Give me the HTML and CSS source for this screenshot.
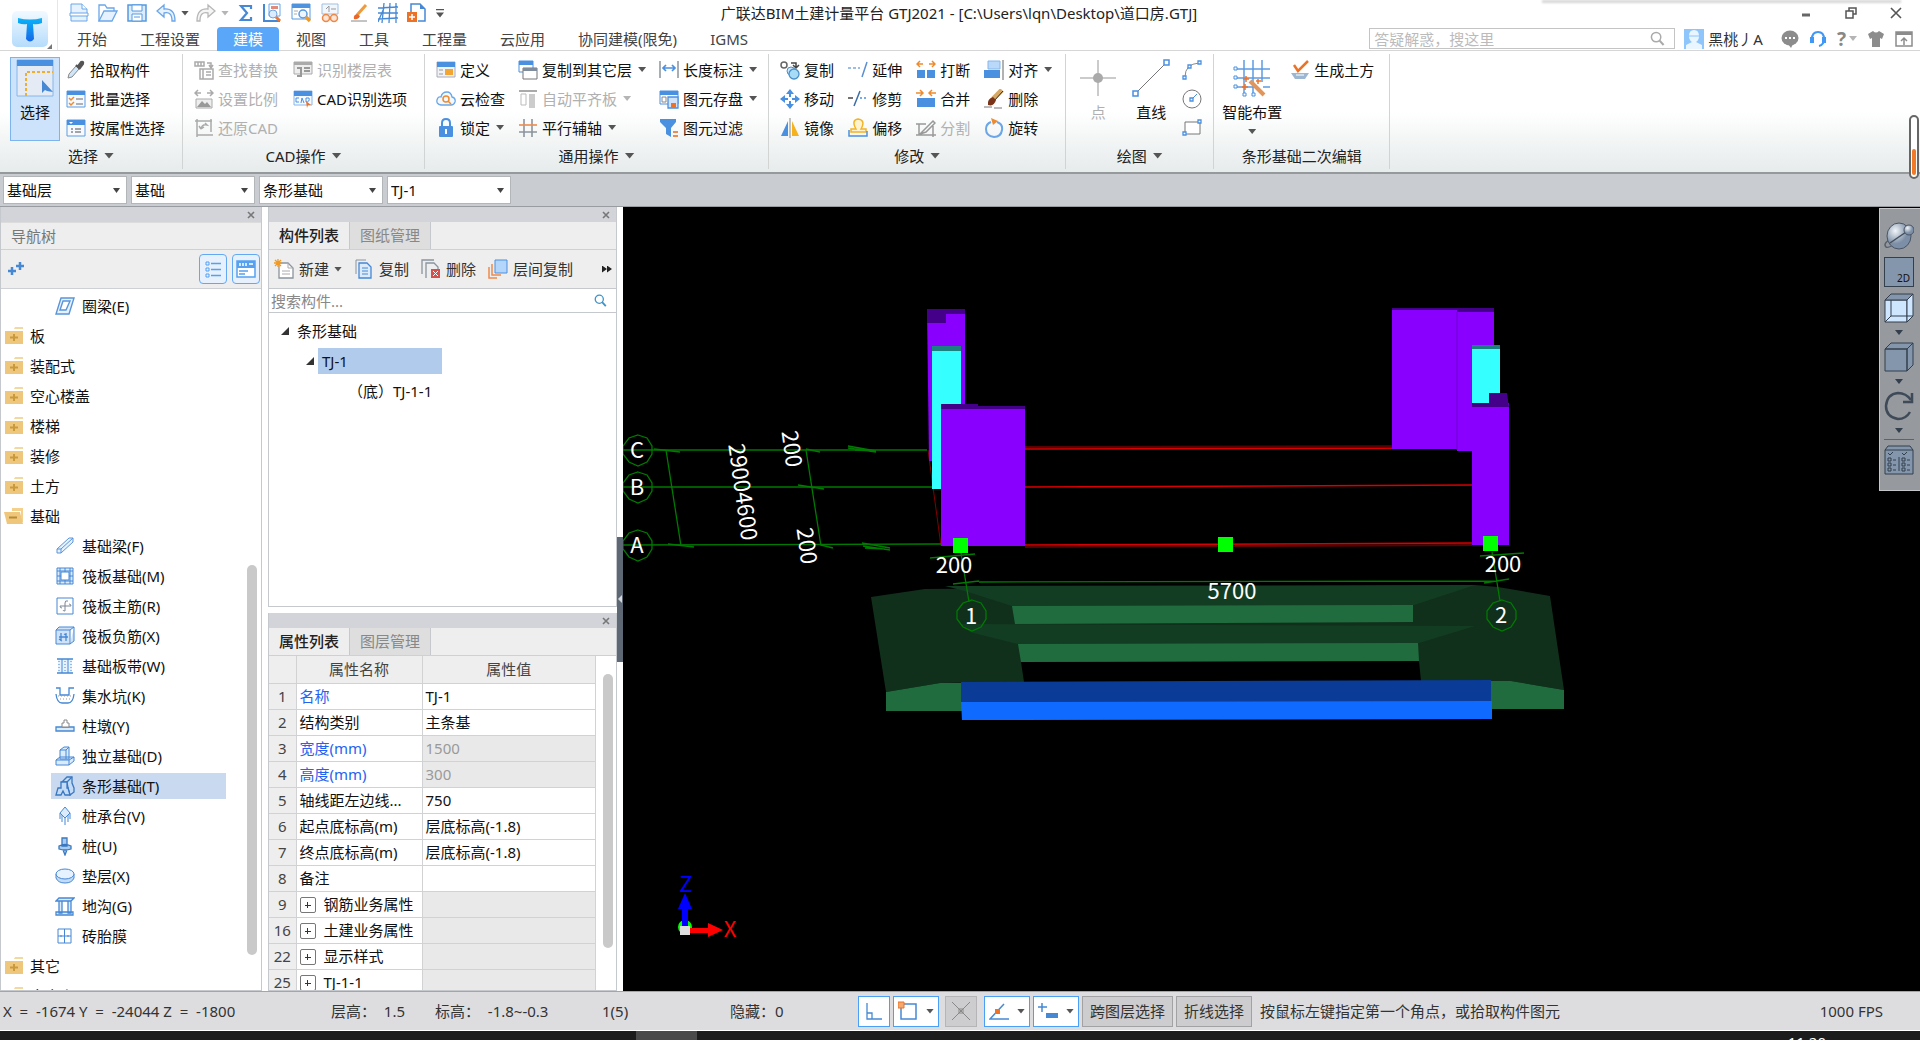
FILE: index.html
```html
<!DOCTYPE html>
<html lang="zh-CN">
<head>
  <meta charset="UTF-8" />
  <meta name="viewport" content="width=device-width, initial-scale=1.0"/>
  <title>广联达BIM土建计量平台 GTJ2021</title>
  <link rel="stylesheet" href="styles.css">
</head>
<body>

  <!-- shared icons -->
  <svg class="defs" width="0" height="0">
    <symbol id="folder" viewBox="0 0 20 20">
      <path d="M10 3l1-2h8v2z" fill="#f3d9a0"/><path d="M1 5h18v13H1z" fill="#eec77d"/>
      <path d="M10 8v7M6 11.500h8" stroke="#c99a3c" stroke-width="2"/>
    </symbol>
    <symbol id="folder-open" viewBox="0 0 20 20">
      <path d="M8 2h11v14h-2V5H8z" fill="#f3d08c"/><path d="M0 6h16l3 12H3z" fill="#eec77d"/>
      <path d="M5 11.500h8" stroke="#b98a35" stroke-width="2"/>
    </symbol>
    <symbol id="search" viewBox="0 0 16 16">
      <circle cx="6.500" cy="6.500" r="5" fill="none" stroke="currentColor" stroke-width="1.600"/><path d="M10 10l4.500 5" stroke="currentColor" stroke-width="2.200"/>
    </symbol>
    <symbol id="close" viewBox="0 0 8 8">
      <path d="M1 1l6 6M7 1L1 7" stroke="#777" stroke-width="1.600"/>
    </symbol>
  </svg>

  <header class="topbar">
    <button class="logo" aria-label="应用菜单">
      <svg width="38" height="38" viewBox="0 0 38 38">
        <defs><linearGradient id="lg" x1="0" y1="0" x2="0" y2="1"><stop offset="0" stop-color="#0ab4f8"/><stop offset="1" stop-color="#1766e8"/></linearGradient>
        <linearGradient id="lb" x1="0" y1="0" x2="0" y2="1"><stop offset="0" stop-color="#f2f9ff"/><stop offset="1" stop-color="#b5dcfb"/></linearGradient></defs>
        <rect x="1" y="1" width="36" height="36" rx="5" fill="url(#lb)"/>
        <path d="M7 8q12 3 24 0v5q-5 2-9 1l1 15q-4 5-8 0l1-15q-4 1-9-1z" fill="url(#lg)"/>
      </svg>
      <span class="corner"></span>
    </button>
    <div class="topmain">
      <div class="titlebar">
        <div class="quick">
          <svg class="ico" viewBox="0 0 20 20"><path d="M2 1h11l5 5v12H2z" fill="#e6f2ff" stroke="#6ba7e8"/><path d="M13 1v5h5M1 10h18v3H1z" fill="#fff" stroke="#6ba7e8"/></svg>
          <svg class="ico" viewBox="0 0 20 20"><path d="M1 18V2h6l2 3h7v4" fill="#fff" stroke="#6ba7e8" stroke-width="1.300"/><path d="M1 18L6 8h13l-5 10z" fill="#e6f2ff" stroke="#6ba7e8" stroke-width="1.300"/></svg>
          <svg class="ico" viewBox="0 0 20 20"><path d="M1 2h18v16H1z" fill="#dcebfd" stroke="#5599e0" stroke-width="1.500"/><path d="M5 2h10v6H5zM5 11h10v7H5z" fill="#fff" stroke="#5599e0"/><path d="M7 14h6" stroke="#5599e0"/></svg>
          <svg class="ico" viewBox="0 0 20 20"><path d="M8 2L1 8l7 6v-4q8-2 8 8h3q0-13-11-12z" fill="#e6f2ff" stroke="#6ba7e8" stroke-width="1.300"/></svg>
          <i class="arrow"></i>
          <svg class="ico redo" viewBox="0 0 20 20"><path d="M12 2l7 6-7 6v-4q-8-2-8 8H1q0-13 11-12z" fill="#f5f5f5" stroke="#b8b8b8" stroke-width="1.300"/></svg>
          <i class="arrow dim"></i>
          <svg class="ico sum" viewBox="0 0 20 20"><path d="M15 6V3H5l6 7-6 7h10v-3" fill="none" stroke="#4688d4" stroke-width="2.200"/></svg>
          <svg class="ico" viewBox="0 0 20 20"><path d="M2 1v17h16" fill="none" stroke="#4688d4" stroke-width="2"/><path d="M7 1h11v12H7z" fill="#fff" stroke="#6ba7e8"/><path d="M9 3h7v3H9z" fill="#e08a7a"/><circle cx="11" cy="11" r="4" fill="#dcebfd" stroke="#6ba7e8"/><path d="M14 14l4 4" stroke="#e8773a" stroke-width="3"/></svg>
          <svg class="ico" viewBox="0 0 20 20"><path d="M1 1h18v15H1z" fill="#fff" stroke="#5599e0"/><path d="M1 1h18v4H1z" fill="#4f93df"/><path d="M3 8h4M3 11h3" stroke="#aaa"/><circle cx="12" cy="11" r="4" fill="#eef5fe" stroke="#5599e0" stroke-width="1.500"/><path d="M15 14l4 4" stroke="#f09a24" stroke-width="3.500"/></svg>
          <svg class="ico" viewBox="0 0 20 20"><path d="M2 1h16v10H2z" fill="#f2f7fd" stroke="#9dbfe5"/><path d="M9 3v6M6 6l3-3M11 6h5" stroke="#999" fill="none"/><circle cx="6" cy="15" r="3.500" fill="#fde6d8" stroke="#ee8846" stroke-width="1.500"/><circle cx="14" cy="15" r="3.500" fill="#fde6d8" stroke="#ee8846" stroke-width="1.500"/></svg>
          <svg class="ico" viewBox="0 0 20 20"><path d="M17 2L8 12" stroke="#f09a3c" stroke-width="3"/><path d="M8 11q-4 1-3 5 4 1 6-3z" fill="#e8662a"/><path d="M2 18h16" stroke="#888"/></svg>
          <svg class="ico" viewBox="0 0 20 20"><path d="M6 0L4 20M12 0l-1 20M18 0v20M0 5l20-1M0 10h20M0 16l20-1M0 19L6 5" stroke="#4688d4" stroke-width="1.300"/></svg>
          <svg class="ico" viewBox="0 0 20 20"><path d="M4 9V1h9l5 5v12h-7" fill="#fff" stroke="#4688d4" stroke-width="1.500"/><path d="M13 1v5h5" fill="#4688d4"/><path d="M0 9h10v10H0z" fill="#ee7226"/><path d="M5 11v6M2 14h6" stroke="#fff" stroke-width="1.500"/></svg>
          <span class="more"></span>
        </div>
        <div class="title">广联达BIM土建计量平台 GTJ2021 - [C:\Users\lqn\Desktop\道口房.GTJ]</div>
        <div class="winbtns">
          <button aria-label="最小化"><svg width="12" height="12"><path d="M2 8h8" stroke="#666" stroke-width="3"/></svg></button>
          <button aria-label="还原"><svg width="12" height="12" fill="#fff" stroke="#555" stroke-width="1.500"><path d="M4 1h7v6H4z"/><path d="M1 4h7v7H1z"/></svg></button>
          <button aria-label="关闭"><svg width="12" height="12"><path d="M1 1l10 10M11 1L1 11" stroke="#555" stroke-width="1.600"/></svg></button>
        </div>
      </div>
      <div class="menurow">
        <nav class="tabs">
          <button>开始</button><button>工程设置</button><button class="active">建模</button><button>视图</button><button>工具</button><button>工程量</button><button>云应用</button><button>协同建模(限免)</button><button>IGMS</button>
        </nav>
        <div class="account">
          <label class="help"><input type="text" placeholder="答疑解惑，搜这里" aria-label="答疑解惑"><svg width="15" height="15"><use href="#search"/></svg></label>
          <svg class="avatar" width="20" height="20" viewBox="0 0 20 20"><path d="M0 0h20v20H0z" fill="#8ec5fb"/><path d="M5 7q0-6 5-6t5 6q0 4-3 6l6 3v4H2v-4l6-3Q5 11 5 7z" fill="#e9f5ff"/><path d="M5 7h10" stroke="#8ec5fb"/></svg>
          <span class="user">黑桃丿A</span>
          <div class="tools">
            <svg width="18" height="18" viewBox="0 0 18 18"><ellipse cx="9" cy="8" rx="8.500" ry="7.500" fill="#8c8c8c"/><path d="M7 14l3 4 2-4z" fill="#8c8c8c"/><path d="M4 8h2M8 8h2M12 8h2" stroke="#fff" stroke-width="2"/></svg>
            <svg width="18" height="18" viewBox="0 0 18 18"><path d="M3 9q0-7 6-7t6 7q0 6-5 7" fill="none" stroke="#3f97f6" stroke-width="2"/><path d="M1 7h4v6H1zM13 7h4v6h-4z" fill="#3f97f6"/></svg>
            <span class="qmark">?<i class="arrow dim"></i></span>
            <svg width="18" height="18" viewBox="0 0 18 18"><path d="M6 1q3 3 6 0l5 3-2 5-2-1v9H5V8L3 9 1 4z" fill="#8c8c8c"/></svg>
            <svg width="18" height="18" viewBox="0 0 18 18"><path d="M1 2h16v14H1z" fill="#fff" stroke="#8c8c8c" stroke-width="1.500"/><path d="M1 2h16v3H1z" fill="#8c8c8c"/><path d="M9 15V8M6 11l3-3 3 3" fill="none" stroke="#8c8c8c" stroke-width="1.500"/></svg>
          </div>
        </div>
      </div>
    </div>
    <div class="topshadow"></div>
  </header>

  <section class="ribbon">
    <div class="group g-select">
      <div class="body">
        <button class="big on">
          <svg width="38" height="38" viewBox="0 0 38 38"><path d="M1 1h36v36H1z" fill="#e4ebf5" stroke="#86b6ea"/><path d="M1 1h36v6H1z" fill="#4a90e0"/><path d="M10 37V13h27" fill="none" stroke="#efae2c" stroke-width="2" stroke-dasharray="3 2"/><path d="M26 21v13l3-3 2 1 6 1z" fill="#4688d4"/></svg>
          选择
        </button>
        <div class="col">
          <button><svg class="ico" viewBox="0 0 20 20"><path d="M2 18l1-4 7-8 3 3-7 8z" fill="#cfe5fa" stroke="#888"/><path d="M10 5l4 4M12 6l3-4q3-1 2 2l-3 4z" fill="#555" stroke="#555" stroke-width="2"/></svg>拾取构件</button>
          <button><svg class="ico" viewBox="0 0 20 20"><path d="M1 2h18v16H1z" fill="#f6faff" stroke="#5c9ce2"/><path d="M1 2h18v4H1z" fill="#4a90e0"/><path d="M3 9l2 2 3-3M3 14l2 2 3-3" fill="none" stroke="#ee8b2e" stroke-width="1.500"/><path d="M10 10h7M10 15h7" stroke="#999" stroke-width="1.500"/></svg>批量选择</button>
          <button><svg class="ico" viewBox="0 0 20 20"><path d="M1 2h18v16H1z" fill="#f6faff" stroke="#5c9ce2"/><path d="M1 2h18v5H1z" fill="#4a90e0"/><path d="M3 4h4l-2 2z" fill="#fff"/><path d="M5 11h2M9 11h6M5 14h2M9 14h6" stroke="#888" stroke-width="1.500"/></svg>按属性选择</button>
        </div>
      </div>
      <div class="caption">选择<i class="arrow lg"></i></div>
    </div>

    <div class="group g-cad">
      <div class="body">
        <div class="col">
          <button disabled><svg class="ico" viewBox="0 0 20 20" fill="none" stroke="#aaa" stroke-width="1.500"><path d="M1 2h9v4H1zM4 2v4M7 2v4M13 3h4v4M15 5l2 3 2-3M6 9h13v10H6zM9 9v10M12 12h5M12 15h5"/></svg>查找替换</button>
          <button disabled><svg class="ico" viewBox="0 0 20 20"><path d="M1 4h6M13 4h6M4 1L1 4l3 3M16 1l3 3-3 3" fill="none" stroke="#aaa" stroke-width="1.500"/><path d="M2 10h16v9H2z" fill="#eee" stroke="#aaa"/><path d="M3 18l5-6 3 3 2-2 4 5z" fill="#999"/></svg>设置比例</button>
          <button disabled><svg class="ico" viewBox="0 0 20 20" fill="none" stroke="#aaa" stroke-width="1.500"><path d="M3 1v18M1 3h17M17 1v13M3 17h16M7 11q1-5 6-4l-2-2M7 11l-2-3M7 11l3-2"/></svg>还原CAD</button>
        </div>
        <div class="col">
          <button disabled><svg class="ico" viewBox="0 0 20 20"><path d="M1 2h18v12H1z" fill="#eee" stroke="#aaa"/><path d="M1 2h18v3H1z" fill="#aaa"/><path d="M4 8h4v8H4M11 8h6M11 11h6" fill="none" stroke="#999" stroke-width="2"/></svg>识别楼层表</button>
          <button><svg class="ico" viewBox="0 0 20 20"><path d="M1 2h18v14H1z" fill="#f6faff" stroke="#86b6ea"/><path d="M1 2h18v5H1z" fill="#4a90e0"/><path d="M6 9H3v4h3M8 14l1-5 2 5M13 9v4q4 0 3-4z" fill="none" stroke="#4a90e0"/><path d="M13 12l5 4-3 0-1 3z" fill="#ee7226"/></svg>CAD识别选项</button>
        </div>
      </div>
      <div class="caption">CAD操作<i class="arrow lg"></i></div>
    </div>

    <div class="group g-common">
      <div class="body">
        <div class="col">
          <button><svg class="ico" viewBox="0 0 20 20"><path d="M1 2h18v15H1z" fill="#f0f2f5" stroke="#aab"/><path d="M1 2h18v5H1z" fill="#4a90e0"/><path d="M9 9h8v6H9z" fill="#f2a531"/><path d="M3 10h4M3 14h4" stroke="#999"/></svg>定义</button>
          <button><svg class="ico" viewBox="0 0 20 20"><path d="M5 16q-5-1-4-5t4-3q1-5 6-5 4 0 5 5 4 1 3 5-1 3-4 3z" fill="#f3f9ff" stroke="#6ba7e8" stroke-width="1.300"/><circle cx="10" cy="10" r="3" fill="none" stroke="#ee8b2e" stroke-width="1.500"/><path d="M12 12l3 3" stroke="#ee8b2e" stroke-width="1.500"/></svg>云检查</button>
          <button><svg class="ico" viewBox="0 0 20 20"><path d="M6 9V5q0-4 4-4t4 4v4" fill="none" stroke="#4a90e0" stroke-width="2"/><rect x="3" y="8" width="14" height="11" rx="1" fill="#4a90e0"/><path d="M10 11v5" stroke="#fff" stroke-width="2"/></svg>锁定<i class="arrow"></i></button>
        </div>
        <div class="col">
          <button><svg class="ico" viewBox="0 0 20 20"><path d="M1 1h14v11H1z" fill="#fff" stroke="#4a90e0"/><path d="M1 1h14v4H1z" fill="#4a90e0"/><path d="M5 8h14v11H5z" fill="#fff" stroke="#777"/><path d="M5 8h14v3H5z" fill="#7e8c9c"/></svg>复制到其它层<i class="arrow"></i></button>
          <button disabled><svg class="ico" viewBox="0 0 20 20"><path d="M1 2h18" stroke="#aaa" stroke-width="2"/><path d="M3 5h5v11H3z" fill="#fff" stroke="#bbb"/><path d="M11 5h6v14h-6z" fill="#ccc"/></svg>自动平齐板<i class="arrow dim"></i></button>
          <button><svg class="ico" viewBox="0 0 20 20"><path d="M6 1v18M14 1v18M1 14h18" stroke="#8b949e" stroke-width="1.600"/><path d="M1 7h18" stroke="#ee8b4e" stroke-width="1.600"/></svg>平行辅轴<i class="arrow"></i></button>
        </div>
        <div class="col">
          <button><svg class="ico" viewBox="0 0 20 20"><path d="M1 1v17M19 1v17" stroke="#8b949e" stroke-width="1.500"/><path d="M4 8h12M7 5L4 8l3 3M13 5l3 3-3 3" fill="none" stroke="#4a90e0" stroke-width="1.700"/></svg>长度标注<i class="arrow"></i></button>
          <button><svg class="ico" viewBox="0 0 20 20"><path d="M1 2h18v13H1z" fill="#fff" stroke="#4a90e0"/><path d="M1 2h18v4H1z" fill="#4a90e0"/><path d="M3 8h4v5H3z" fill="none" stroke="#888"/><path d="M9 8h10v11H9z" fill="#cfe2f8" stroke="#4a90e0" stroke-width="1.300"/><path d="M12 14h5v5h-5z" fill="#ee7226"/></svg>图元存盘<i class="arrow"></i></button>
          <button><svg class="ico" viewBox="0 0 20 20"><path d="M1 1h16v3l-5 6v9l-5-3v-6L1 4z" fill="#4a90e0"/><path d="M14 14h5M14 18h5" stroke="#ee8b4e" stroke-width="1.800"/></svg>图元过滤</button>
        </div>
      </div>
      <div class="caption">通用操作<i class="arrow lg"></i></div>
    </div>

    <div class="group g-edit">
      <div class="body">
        <div class="col">
          <button><svg class="ico" viewBox="0 0 20 20"><circle cx="4" cy="5" r="3" fill="#fff" stroke="#666" stroke-width="1.500"/><path d="M11 3h5v4M13 5l3 3 3-3" fill="none" stroke="#444" stroke-width="1.500"/><circle cx="11" cy="11" r="4" fill="#cfe8ff" stroke="#4a90c8"/><circle cx="14" cy="14" r="5" fill="#a6dcf5" stroke="#4a90c8" stroke-width="1.300"/></svg>复制</button>
          <button><svg class="ico" viewBox="0 0 20 20"><path d="M10 1v18M1 10h18" stroke="#4a90e0" stroke-width="2" /><path d="M6 6h8v8H6z" fill="#fff"/><path d="M10 0l4 5H6zM10 20l4-5H6zM0 10l5-4v8zM20 10l-5-4v8z" fill="#4a90e0"/><path d="M10 4v4M10 12v4M4 10h4M12 10h4" stroke="#4a90e0" stroke-width="2"/></svg>移动</button>
          <button><svg class="ico" viewBox="0 0 20 20"><path d="M8 3v15H1z" fill="#4a90e0"/><path d="M12 3v15h7z" fill="#f6b21c"/><path d="M10 0v20" stroke="#888"/></svg>镜像</button>
        </div>
        <div class="col">
          <button><svg class="ico" viewBox="0 0 20 20"><path d="M0 8h12" stroke="#7da9dc" stroke-width="1.500" stroke-dasharray="3 2"/><path d="M19 2l-5 15" stroke="#5c8fcf" stroke-width="1.500"/></svg>延伸</button>
          <button><svg class="ico" viewBox="0 0 20 20"><path d="M0 9h5" stroke="#444" stroke-width="1.500"/><path d="M12 9h8" stroke="#4a90e0" stroke-width="1.500" stroke-dasharray="2 2"/><path d="M12 2L6 17" stroke="#3c6ea8" stroke-width="1.500"/></svg>修剪</button>
          <button><svg class="ico" viewBox="0 0 20 20"><path d="M3 14v-3h5Q3 2 10 1q8 1 3 10h5v3z" fill="#fff4cf" stroke="#f0b429" stroke-width="1.500"/><path d="M1 12v6h18v-5" fill="none" stroke="#4a90e0" stroke-width="1.500"/></svg>偏移</button>
        </div>
        <div class="col">
          <button><svg class="ico" viewBox="0 0 20 20"><path d="M1 10h8v8H1zM11 10h8v8h-8z" fill="#4a90e0"/><path d="M1 4h6M4 1L1 4l3 3M13 4h6M16 1l3 3-3 3" fill="none" stroke="#ee8b2e" stroke-width="1.500"/></svg>打断</button>
          <button><svg class="ico" viewBox="0 0 20 20"><path d="M1 9h18v9H1z" fill="#4a90e0"/><path d="M0 4h6M4 1l3 3-3 3M20 4h-6M16 1l-3 3 3 3" fill="none" stroke="#ee8b2e" stroke-width="1.500"/></svg>合并</button>
          <button disabled><svg class="ico" viewBox="0 0 20 20" fill="none" stroke="#999" stroke-width="1.500"><path d="M0 6h10M3 6v11M0 17h20M17 8v11M4 16L17 3l2 2-9 9z"/></svg>分割</button>
        </div>
        <div class="col">
          <button><svg class="ico" viewBox="0 0 20 20"><path d="M4 1h12v8H4z" fill="#b9d8fa" stroke="#86b6ea"/><path d="M0 10h16v8H0z" fill="#4a90e0"/><path d="M19 0v20" stroke="#999" stroke-width="1.500"/></svg>对齐<i class="arrow"></i></button>
          <button><svg class="ico" viewBox="0 0 20 20"><path d="M18 1l-9 9" stroke="#d6a868" stroke-width="5"/><path d="M19 2l-9 10" stroke="#333"/><path d="M9 8q-6 2-5 8 6 2 8-5z" fill="#7a3418"/><path d="M0 18h8M10 19h8" stroke="#777"/></svg>删除</button>
          <button><svg class="ico" viewBox="0 0 20 20"><path d="M13 4q6 2 5 8-1 7-8 7-8-1-8-8 0-5 5-7" fill="none" stroke="#6ba7e8" stroke-width="2"/><path d="M7 0l7 3-5 4z" fill="#ee8b2e"/></svg>旋转</button>
        </div>
      </div>
      <div class="caption">修改<i class="arrow lg"></i></div>
    </div>

    <div class="group g-draw">
      <div class="body">
        <button class="big" disabled><svg width="38" height="38" viewBox="0 0 38 38"><path d="M19 1v36M1 19h36" stroke="#bbb" stroke-width="1.500"/><circle cx="19" cy="19" r="5" fill="#aaa"/></svg>点</button>
        <button class="big"><svg width="38" height="38" viewBox="0 0 38 38"><path d="M4 34L34 4" stroke="#777"/><path d="M1 32h5v5H1zM32 1h5v5h-5z" fill="#fff" stroke="#4a90e0" stroke-width="1.500"/></svg>直线</button>
        <div class="col shapes">
          <button aria-label="弧"><svg class="ico" viewBox="0 0 20 20"><path d="M3 17Q3 4 17 3" fill="none" stroke="#888"/><path d="M1 16h3v3H1zM6 5h3v3H6zM16 1h3v3h-3z" fill="#fff" stroke="#4a90e0" stroke-width="1.300"/></svg></button>
          <button aria-label="圆"><svg class="ico" viewBox="0 0 20 20"><circle cx="10" cy="10" r="9" fill="#fff" stroke="#777"/><path d="M10 10l5-5" stroke="#4a90e0"/><path d="M8 9h3v3H8z" fill="#fff" stroke="#4a90e0" stroke-width="1.300"/></svg></button>
          <button aria-label="矩形"><svg class="ico" viewBox="0 0 20 20"><path d="M3 4h15v12H3z" fill="#fff" stroke="#777"/><path d="M1 14h3v3H1zM16 2h3v3h-3z" fill="#fff" stroke="#4a90e0" stroke-width="1.300"/></svg></button>
        </div>
      </div>
      <div class="caption">绘图<i class="arrow lg"></i></div>
    </div>

    <div class="group g-strip">
      <div class="body">
        <button class="big"><svg width="38" height="38" viewBox="0 0 38 38"><path d="M11 1v36M20 1v36M29 1v22M1 10h36M1 19h36M1 28h20M30 28h7" stroke="#5c9ce2" stroke-width="1.500"/><path d="M1 8h3v3H1zM1 17h3v3H1zM1 26h3v3H1zM10 34h3v3h-3zM19 34h3v3h-3z" fill="#fff" stroke="#4a90e0"/><path d="M17 22l14 14" stroke="#e2955a" stroke-width="4"/><path d="M13 17v6M10 20h6M12 25v6M9 28h6M25 20v5M23 22h5" stroke="#ee7226" stroke-width="1.500"/></svg>智能布置<i class="arrow"></i></button>
        <div class="col">
          <button><svg class="ico" viewBox="0 0 20 20"><path d="M1 13h18l-4 6H5z" fill="#9db7d3"/><path d="M6 15h8" stroke="#fff"/><path d="M4 5l4 6L18 1" fill="none" stroke="#ee7226" stroke-width="2.500"/></svg>生成土方</button>
        </div>
      </div>
      <div class="caption">条形基础二次编辑</div>
    </div>
    <div class="meter"><span></span></div>
  </section>

  <section class="filters">
    <label class="combo"><select aria-label="楼层"><option>基础层</option></select></label>
    <label class="combo"><select aria-label="构件类别"><option>基础</option></select></label>
    <label class="combo"><select aria-label="构件类型"><option>条形基础</option></select></label>
    <label class="combo"><select aria-label="构件"><option>TJ-1</option></select></label>
  </section>

  <main class="workspace">
    <aside class="panel nav">
      <div class="grab"><button aria-label="关闭"><svg width="8" height="8"><use href="#close"/></svg></button></div>
      <div class="navtitle">导航树</div>
      <div class="navtools">
        <svg width="18" height="16" viewBox="0 0 18 16"><path d="M4 6v8M0 10h8M12 1v8M8 5h8" stroke="#4688d4" stroke-width="2.500"/></svg>
        <button aria-label="列表"><svg width="18" height="18" viewBox="0 0 18 18" fill="none" stroke="#55a0f0"><path d="M2 2h3v3H2zM2 8h3v3H2zM2 14h3v3H2z"/><path d="M7 3.500h10M7 9.500h10M7 15.500h10" stroke-width="1.500"/></svg></button>
        <button aria-label="卡片"><svg width="20" height="18" viewBox="0 0 20 18"><path d="M1 1h18v16H1z" fill="#fff" stroke="#55a0f0" stroke-width="1.500"/><path d="M1 1h18v7H1z" fill="#55a0f0"/><path d="M4 3v3M7 3v3M10 3v3M13 4h4" stroke="#fff" stroke-width="1.500"/><path d="M3 11h9M3 14h6" stroke="#55a0f0" stroke-width="1.500"/></svg></button>
      </div>
      <ul class="tree">
        <li class="leaf"><svg class="ico" viewBox="0 0 20 20"><path d="M6 2h13l-5 16H1zM8 5L5 14h6l4-9z" fill="#e6f2ff" stroke="#5a95d8" stroke-width="1.400"/></svg>圈梁(E)</li>
        <li><svg class="ico"><use href="#folder"/></svg>板</li>
        <li><svg class="ico"><use href="#folder"/></svg>装配式</li>
        <li><svg class="ico"><use href="#folder"/></svg>空心楼盖</li>
        <li><svg class="ico"><use href="#folder"/></svg>楼梯</li>
        <li><svg class="ico"><use href="#folder"/></svg>装修</li>
        <li><svg class="ico"><use href="#folder"/></svg>土方</li>
        <li><svg class="ico"><use href="#folder-open"/></svg>基础</li>
        <li class="leaf"><svg class="ico" viewBox="0 0 20 20"><path d="M2 13L14 2h4v4L6 17H2zM2 13h4v4M6 13L18 2" fill="#e6f2ff" stroke="#5a95d8"/></svg>基础梁(F)</li>
        <li class="leaf"><svg class="ico" viewBox="0 0 20 20"><path d="M2 2h16v16H2z" fill="#dcebfb" stroke="#4688d4"/><path d="M6 6h8v8H6z" fill="#fff" stroke="#4688d4"/><path d="M5 2v16M15 2v16M2 5h16M2 15h16M10 2v4M10 14v4M2 10h4M14 10h4" stroke="#4688d4"/></svg>筏板基础(M)</li>
        <li class="leaf"><svg class="ico" viewBox="0 0 20 20"><path d="M2 2h16v16H2z" fill="#fff" stroke="#4688d4"/><path d="M5 10h11M10 15V7q0-3 3-2M5 10q0 2 2 2M16 10q0-2-2-2M10 15q-2 0-2-1" fill="none" stroke="#7c8894"/></svg>筏板主筋(R)</li>
        <li class="leaf"><svg class="ico" viewBox="0 0 20 20"><path d="M1 4h14v14H1zM1 4l3-3h15l-4 3M19 1v14l-4 3" fill="#cfe2f8" stroke="#4688d4"/><path d="M4 11h9M4 13l3 2M6 7v8M11 7v8M9 8l2 1" stroke="#4688d4" stroke-width="1.300"/></svg>筏板负筋(X)</li>
        <li class="leaf"><svg class="ico" viewBox="0 0 20 20"><path d="M3 3h14v14H3z" fill="#e6f2ff"/><path d="M2 3h16M2 17h16" stroke="#4688d4" stroke-width="1.500"/><path d="M7 3v14M13 3v14" stroke="#4688d4"/><path d="M4 5v11M10 5v11M16 5v11" stroke="#4688d4" stroke-dasharray="1 2"/></svg>基础板带(W)</li>
        <li class="leaf"><svg class="ico" viewBox="0 0 20 20"><path d="M1 2h4v7h9V2h5M1 8q1 9 6 9h6q5 0 6-9" fill="none" stroke="#4688d4" stroke-width="1.300"/><path d="M3 10h14M5 13h10" stroke="#999" stroke-dasharray="1 2"/></svg>集水坑(K)</li>
        <li class="leaf"><svg class="ico" viewBox="0 0 20 20"><path d="M1 11h18v4H1z" fill="#dcebfb" stroke="#4688d4" stroke-width="1.300"/><path d="M7 11V7h2V4h3v3h2v4z" fill="#fff" stroke="#888"/></svg>柱墩(Y)</li>
        <li class="leaf"><svg class="ico" viewBox="0 0 20 20"><path d="M1 14h13v5H1zM1 14l4-3h14v4l-5 4M5 13V4l4-3h5v12zM14 14l5-3M5 4h6v9M11 4l3-3" fill="#dcebfb" stroke="#4688d4"/></svg>独立基础(D)</li>
        <li class="leaf on"><svg class="ico" viewBox="0 0 20 20" fill="#c4dbf5" stroke="#3978c0" stroke-width="1.300"><path d="M7 6l5-5h5v6l2 5v4l-4 3-2-7-1-6z"/><path d="M1 19l2-7h3V6h6v6h1l2 7h-5l-2-4-2 4zM12 6l5-5"/></svg>条形基础(T)</li>
        <li class="leaf"><svg class="ico" viewBox="0 0 20 20"><path d="M10 1l5 6-5 5-5-5zM5 7v6M10 12v7M15 7v6M7 9v7M13 9v7" fill="#dcebfb" stroke="#4688d4"/></svg>桩承台(V)</li>
        <li class="leaf"><svg class="ico" viewBox="0 0 20 20"><path d="M7 2h5v8H7zM4 10q6-3 12 0v3q-6 2-12 0zM8 14h4l-2 5z" fill="#a8cbf1" stroke="#3978c0" stroke-width="1.300"/></svg>桩(U)</li>
        <li class="leaf"><svg class="ico" viewBox="0 0 20 20"><path d="M1 8v4q2 5 9 5t9-5V8" fill="#c4dbf5" stroke="#4688d4"/><ellipse cx="10" cy="8" rx="9" ry="5" fill="#e6f2ff" stroke="#4688d4"/></svg>垫层(X)</li>
        <li class="leaf"><svg class="ico" viewBox="0 0 20 20"><path d="M1 5l3-3h15l-3 3zM4 5h3v12H4zM13 5h3v12h-3zM1 16h17v3H1z" fill="#dcebfb" stroke="#4688d4" stroke-width="1.300"/></svg>地沟(G)</li>
        <li class="leaf"><svg class="ico" viewBox="0 0 20 20"><path d="M3 3h13v14H3zM3 10h13M9.500 3v14" fill="#fff" stroke="#4688d4"/><path d="M6 9v2M13 9v2" stroke="#4688d4"/></svg>砖胎膜</li>
        <li><svg class="ico"><use href="#folder"/></svg>其它</li>
        <li><svg class="ico"><use href="#folder"/></svg>自定义</li>
      </ul>
      <span class="thumb nav-thumb"></span>
    </aside>

    <div class="middle">
      <section class="panel">
        <div class="grab"><button aria-label="关闭"><svg width="8" height="8"><use href="#close"/></svg></button></div>
        <div class="subtabs"><button class="active">构件列表</button><button>图纸管理</button></div>
        <div class="tools-row">
          <button><svg class="ico" viewBox="0 0 20 20"><path d="M5 4h9l5 5v10H5z" fill="#fff" stroke="#8b949e" stroke-width="1.300"/><path d="M14 4v5h5M8 12h8M8 15h8" fill="none" stroke="#aaa"/><path d="M4 0v8M0 4h8M1 1l6 6M7 1L1 7" stroke="#f09a24" stroke-width="1.300"/></svg>新建<i class="arrow"></i></button>
          <button><svg class="ico" viewBox="0 0 20 20"><path d="M2 15V1h10" fill="none" stroke="#8b949e"/><path d="M5 4h8l4 4v11H5z" fill="#dcebfb" stroke="#4688d4" stroke-width="1.300"/><path d="M8 9h6M8 12h6M8 15h6" stroke="#4688d4"/></svg>复制</button>
          <button><svg class="ico" viewBox="0 0 20 20"><path d="M1 15V1h12M5 19V4h8l4 4v4" fill="none" stroke="#8b949e" stroke-width="1.300"/><path d="M10 10h9v9h-9z" fill="#d8504c"/><path d="M12 12l5 5M17 12l-5 5" stroke="#fff"/></svg>删除</button>
          <button><svg class="ico" viewBox="0 0 20 20"><path d="M1 8v11h8M4 5v11h9" fill="none" stroke="#ee8b4e" stroke-width="1.500"/><path d="M7 1h12v13H7z" fill="#b5d6fb" stroke="#4a90e0"/></svg>层间复制</button>
          <span class="chev"></span>
        </div>
        <label class="find"><input type="text" placeholder="搜索构件..." aria-label="搜索构件"><svg width="13" height="13"><use href="#search"/></svg></label>
        <ul class="comps">
          <li><i class="open"></i><span>条形基础</span></li>
          <li class="l2"><i class="open"></i><span class="sel">TJ-1</span></li>
          <li class="l3"><span>（底）TJ-1-1</span></li>
        </ul>
      </section>

      <section class="panel props">
        <div class="grab"><button aria-label="关闭"><svg width="8" height="8"><use href="#close"/></svg></button></div>
        <div class="subtabs"><button class="active">属性列表</button><button>图层管理</button></div>
        <div class="propwrap">
          <table>
            <thead><tr><th class="n"></th><th class="k">属性名称</th><th>属性值</th></tr></thead>
            <tbody>
              <tr><th>1</th><td class="link">名称</td><td>TJ-1</td></tr>
              <tr><th>2</th><td>结构类别</td><td>主条基</td></tr>
              <tr><th>3</th><td class="link">宽度(mm)</td><td class="ro">1500</td></tr>
              <tr><th>4</th><td class="link">高度(mm)</td><td class="ro">300</td></tr>
              <tr><th>5</th><td>轴线距左边线...</td><td>750</td></tr>
              <tr><th>6</th><td>起点底标高(m)</td><td>层底标高(-1.8)</td></tr>
              <tr><th>7</th><td>终点底标高(m)</td><td>层底标高(-1.8)</td></tr>
              <tr><th>8</th><td>备注</td><td></td></tr>
              <tr><th>9</th><td><button class="plus" aria-label="展开"></button>钢筋业务属性</td><td class="ro"></td></tr>
              <tr><th>16</th><td><button class="plus" aria-label="展开"></button>土建业务属性</td><td class="ro"></td></tr>
              <tr><th>22</th><td><button class="plus" aria-label="展开"></button>显示样式</td><td class="ro"></td></tr>
              <tr><th>25</th><td><button class="plus" aria-label="展开"></button>TJ-1-1</td><td class="ro"></td></tr>
            </tbody>
          </table>
          <span class="thumb"></span>
        </div>
      </section>
    </div>

    <div class="splitter"><button aria-label="收起"></button></div>

    <div class="viewport">
      <svg class="scene" viewBox="623 207 1297 784" preserveAspectRatio="xMinYMin meet">
        <!-- strip foundation -->
        <path d="M871 597L925 589 1475 585 1498 587 1550 596 1564 690 1511 681 1421 681 1419 661 1021 662 1024 682 940 683 886 692z" fill="#10301c"/>
        <path d="M945 586L1475 585 1414 605 1012 606 965 591zM960 624L1475 626 1419 643 1018 644 970 632z" fill="#133d23"/>
        <path d="M1012 606L1413 605v17L1015 624zM1018 644L1418 643l1 18L1021 662z" fill="#206c3e"/>
        <path d="M886 692L940 683h22v28H886zM1491 681h20l53 9v19h-73z" fill="#206c3e"/>
        <path d="M961 682L1491 680v22H961z" fill="#0a3b96"/>
        <path d="M961 702L1492 701v18L962 720z" fill="#0f6bff"/>

        <!-- beams and columns -->
        <path d="M928 450L941 546" stroke="#800000"/>
        <path d="M1025 447L1472 446M1025 547L1472 545" stroke="#5a0000" stroke-width="2"/>
        <path d="M1025 449L1472 448M1025 487L1472 485M1025 545L1472 543" stroke="#d80000" stroke-width="1.500"/>
        <path d="M927 309h38v152H929z" fill="#8a00ff"/>
        <path d="M927 309h38v5H946v9H927z" fill="#45008a"/>
        <path d="M932 346h29v143H932z" fill="#36ffff"/><path d="M932 346h29v5H932z" fill="#1b8080"/>
        <path d="M941 406h84v140H941z" fill="#8a00ff"/><path d="M941 404h37v2h47v3H941z" fill="#45008a"/>
        <path d="M1392 308h102v143h-37v-2h-65z" fill="#8a00ff"/><path d="M1392 308h102v4h-37v-2h-65z" fill="#45008a"/><path d="M1457 312v138" stroke="#6d00cc"/>
        <path d="M1472 345h28v58h-28z" fill="#36ffff"/><path d="M1472 345h28v4h-28z" fill="#1b8080"/>
        <path d="M1472 403h37v142h-37z" fill="#8a00ff"/><path d="M1489 393h18l2 14h-37v-4h17z" fill="#45008a"/>

        <!-- axis grid -->
        <g fill="none" stroke="#007a00" stroke-width="1.300">
          <path d="M623 450H927M623 487H932M623 545L941 544"/>
          <path d="M666 450L681 546M806 450L821 546M654 449l26 3M798 485l26 4M668 544l26 3M806 449l14 3M821 545l12 3"/>
          <path d="M848 446l28 5M848 448l28 4M855 450l20 1M862 543l28 5M863 546l27 4M865 548l20 1"/>
          <path d="M961 553L969 602M930 558L975 554M953 584L979 581M979 582L1496 581M1492 552L1500 601M1480 556L1524 553M1484 583L1509 579"/>
          <path id="oct" d="M638 435l9 3 5 8v8l-5 8-9 4-9-4-6-8v-8l6-8z"/>
          <use href="#oct" y="37"/><use href="#oct" y="95"/><use href="#oct" x="334" y="165"/><use href="#oct" x="864" y="165"/>
        </g>
        <path d="M953 538h15v15H953zM1218 537h15v15H1218zM1483 536h15v15H1483z" fill="#00ff00"/>
        <g class="dims">
          <text x="637" y="458">C</text><text x="637" y="495">B</text><text x="637" y="553">A</text>
          <text x="971" y="624">1</text><text x="1501" y="623">2</text>
          <text x="954" y="573">200</text><text x="1503" y="572">200</text><text x="1232" y="599">5700</text>
          <text transform="translate(784 450) rotate(82)">200</text>
          <text transform="translate(799 547) rotate(82)">200</text>
          <text transform="translate(735 493) rotate(82)">29004600</text>
        </g>

        <!-- coordinate gizmo -->
        <circle cx="685" cy="927" r="7" fill="#00ff00"/>
        <path d="M682 926v-17h-4l7-16 7 16h-4v17z" fill="#0000ff"/>
        <path d="M690 928h18v-5l15 7-15 7v-4h-18z" fill="#ff0000"/>
        <path d="M680 926h10v9h-10z" fill="#ddd"/>
        <g class="dims"><text x="686" y="892" class="z">Z</text><text x="730" y="937" class="x">X</text></g>
      </svg>

      <div class="viewtools">
        <button aria-label="动态观察"><svg width="30" height="30" viewBox="0 0 30 30"><defs><radialGradient id="ball" cx=".35" cy=".3"><stop offset="0" stop-color="#f2f6fa"/><stop offset="1" stop-color="#7d8fa6"/></radialGradient></defs><path d="M5 19q-6 4-3 7t24-15" fill="none" stroke="#555f6b" stroke-width="1.500"/><ellipse cx="15" cy="15" rx="12" ry="13" fill="url(#ball)" stroke="#4a5565"/><path d="M6 22L25 9" stroke="#444f5c" stroke-width="1.500"/><circle cx="25" cy="9" r="5" fill="url(#ball)" stroke="#4a5565"/></svg></button>
        <button class="d2">2D</button>
        <button aria-label="线框"><svg width="30" height="30" viewBox="0 0 30 30" stroke="#333f4d"><path d="M1 7h22v22H1z" fill="#cfe6ff"/><path d="M1 7l6-6h22l-6 6z" fill="#8496ab"/><path d="M23 7l6-6v22l-6 6z" fill="#cfe6ff"/><path d="M7 7v16h22M7 23l-6 6" fill="none"/></svg></button>
        <i class="arrow"></i>
        <button aria-label="实体"><svg width="30" height="30" viewBox="0 0 30 30" stroke="#333f4d" fill="#8496ab"><path d="M1 7h22v22H1zM1 7l6-6h22l-6 6zM23 7l6-6v22l-6 6z"/></svg></button>
        <i class="arrow"></i>
        <button aria-label="旋转"><svg width="30" height="30" viewBox="0 0 30 30"><path d="M26 21q-4 7-12 7Q2 26 2 15 3 3 14 2q8 0 13 7" fill="none" stroke="#3f4a58" stroke-width="2.500"/><path d="M28 2v9h-9" fill="none" stroke="#3f4a58" stroke-width="2.500"/></svg></button>
        <i class="arrow"></i>
        <hr>
        <button aria-label="显示设置"><svg width="30" height="30" viewBox="0 0 30 30" fill="#8496ab" stroke="#333f4d"><path d="M1 5l3-4h22l3 4v24H1zM1 5h28"/><path d="M4 8l2 2 3-3M18 8l2 2 3-3M15 12v14M4 13h3v3H4zM4 18h3v3H4zM4 23h3v3H4zM18 13h3v3h-3zM18 18h3v3h-3zM18 23h3v3h-3zM9 15h3M9 20h3M9 25h3M23 15h3M23 20h3M23 25h3" fill="none"/></svg></button>
      </div>
    </div>
  </main>

  <footer class="status">
    <div class="readout">
      <span>X&nbsp; =&nbsp; -1674 Y&nbsp; =&nbsp; -24044 Z&nbsp; =&nbsp; -1800</span><span>层高：&nbsp; 1.5</span><span>标高：&nbsp; -1.8~-0.3</span><span>1(5)</span><span>隐藏：0</span>
    </div>
    <div class="toggles">
      <button class="tg" aria-label="正交"><svg width="20" height="20" fill="none" stroke="#4688d4"><path d="M3 2v16h15M3 12h5v6" stroke-width="1.300"/></svg></button>
      <button class="tg wide" aria-label="捕捉"><svg width="20" height="20"><path d="M3 3h15v15H3z" fill="none" stroke="#4688d4" stroke-width="1.500"/><path d="M0 1h6v6H0z" fill="#f6a96c" stroke="#ee7226"/></svg><i class="arrow"></i></button>
      <button class="tg off" aria-label="交点"><svg width="20" height="20" fill="none" stroke="#888"><path d="M1 1l18 18M19 1L1 19M8 8h4v4H8z"/></svg></button>
      <button class="tg wide gap" aria-label="角度"><svg width="20" height="20"><path d="M15 3L1 18h19" fill="none" stroke="#4688d4" stroke-width="1.500"/><path d="M6 8h5v5H6z" fill="#ee7226"/></svg><i class="arrow"></i></button>
      <button class="tg wide" aria-label="动态输入"><svg width="20" height="20"><path d="M4 2v9M0 6h9" stroke="#4688d4" stroke-width="1.500"/><path d="M8 12h12v5H8z" fill="#4688d4"/></svg><i class="arrow"></i></button>
      <button class="txt">跨图层选择</button>
      <button class="txt">折线选择</button>
    </div>
    <span class="hint">按鼠标左键指定第一个角点，或拾取构件图元</span>
    <span class="fps">1000 FPS</span>
  </footer>
  <div class="taskbar"><span class="task"></span><time>11:20</time></div>

</body>
</html>
```
FILE: styles.css
```css
* {
  box-sizing: border-box;
}
body {
  margin: 0;
  height: 100vh;
  display: flex;
  flex-direction: column;
  overflow: hidden;
  background: #fff;
  color: #111;
  font-family: "Noto Sans", "Noto Sans CJK SC", sans-serif;
  font-size: 15px;
  line-height: 20px;
  white-space: nowrap;
}
button, input, select {
  font: inherit;
  color: inherit;
  border: 0;
  padding: 0;
  margin: 0;
  background: none;
}
ul {
  list-style: none;
  margin: 0;
  padding: 0;
}
.defs {
  position: absolute;
}
.ico {
  width: 20px;
  height: 20px;
  flex: none;
}
.arrow {
  flex: none;
  width: 8px;
  height: 5px;
  background: #555;
  clip-path: polygon(0 0, 100% 0, 50% 100%);
}
.arrow.dim {
  background: #b5b5b5;
}
.arrow.lg {
  width: 10px;
  height: 6px;
}

/* title and menu */
.topbar {
  position: relative;
  display: flex;
  height: 51px;
  border-bottom: 1px solid #d6d6d6;
}
.logo {
  position: relative;
  width: 58px;
  padding: 10px 0 0 3px;
  border-right: 1px solid #e6e6e6;
}
.corner {
  position: absolute;
  right: 5px;
  bottom: 1px;
  width: 5px;
  height: 5px;
  background: #777;
  clip-path: polygon(100% 0, 100% 100%, 0 100%);
}
.topmain {
  flex: 1;
}
.titlebar {
  display: grid;
  grid-template-columns: 1fr auto 1fr;
  align-items: center;
  height: 26px;
}
.quick {
  display: flex;
  align-items: center;
  gap: 9px;
  padding-left: 11px;
}
.quick .redo {
  margin-left: -2px;
}
.quick .sum {
  margin: 0 -3px 0 -2px;
}
.quick .arrow {
  margin-left: -4px;
}
.more {
  width: 8px;
  height: 9px;
  background: #555;
  clip-path: polygon(0 0, 100% 0, 100% 20%, 0 20%, 0 45%, 100% 45%, 50% 100%, 0 45%);
}
.title {
  margin-right: 60px;
  color: #222;
}
.winbtns {
  display: flex;
  justify-content: flex-end;
  gap: 33px;
  padding-right: 18px;
}
.winbtns button, .winbtns svg {
  display: block;
}
.menurow {
  display: flex;
  justify-content: space-between;
}
.tabs {
  display: flex;
  gap: 1px;
  padding-left: 3px;
}
.tabs button {
  height: 24px;
  margin-top: 1px;
  padding: 0 16px;
  color: #444;
}
.tabs .active {
  background: #5aa6f8;
  border-radius: 4px 4px 0 0;
  color: #fff;
}
.account {
  display: flex;
  align-items: center;
  padding-right: 7px;
}
.help {
  display: flex;
  align-items: center;
  width: 306px;
  height: 21px;
  padding: 0 9px 0 4px;
  margin-right: 9px;
  border: 1px solid #c4c4c4;
  color: #aaa;
}
.help input {
  flex: 1;
  min-width: 0;
  outline: none;
  height: 19px;
}
input::placeholder {
  color: #bbb;
  opacity: 1;
}
.user {
  margin: 0 18px 0 4px;
  color: #333;
}
.tools {
  display: flex;
  align-items: center;
  gap: 10px;
}
.qmark {
  display: flex;
  align-items: center;
  gap: 3px;
  color: #888;
  font-size: 19px;
  font-weight: 700;
}
.topshadow {
  position: absolute;
  top: 0;
  right: 19px;
  width: 359px;
  height: 3px;
  background: #d6d6d6;
  filter: blur(1px);
}

/* ribbon */
.ribbon {
  position: relative;
  display: flex;
  height: 123px;
  padding: 3px 0;
  background: linear-gradient(#fff 50%, #e6ebeb);
  border-bottom: 2px solid #96999c;
}
.group {
  display: flex;
  flex-direction: column;
  border-right: 1px solid #d2d4d4;
}
.body {
  display: flex;
  gap: 13px;
  height: 89px;
  padding: 1px 11px 0;
}
.col {
  display: flex;
  flex-direction: column;
}
.col button {
  display: flex;
  align-items: center;
  gap: 4px;
  height: 29px;
}
.col .arrow {
  margin-left: 2px;
}
button:disabled {
  color: #b0b0b0;
}
.big {
  display: flex;
  flex-direction: column;
  align-items: center;
  gap: 5px;
  height: 84px;
  padding-top: 4px;
}
.big.on {
  width: 50px;
  margin-top: 2px;
  padding-top: 1px;
  background: #cce3fb;
  border: 1px solid #7db4f0;
}
.caption {
  display: flex;
  align-items: center;
  justify-content: center;
  gap: 6px;
  height: 27px;
  color: #222;
}
.g-select .body {
  gap: 6px;
  padding-left: 10px;
  padding-right: 17px;
}
.g-cad .body {
  gap: 15px;
  padding-right: 17px;
}
.g-edit .body {
  gap: 14px;
  padding-right: 13px;
}
.g-draw .body {
  gap: 15px;
  padding-left: 13px;
}
.g-draw .shapes {
  margin-left: -3px;
}
.g-strip .body {
  gap: 8px;
  padding-left: 8px;
  padding-right: 15px;
}
.g-strip .big .arrow {
  margin-top: 2px;
}
.meter {
  position: absolute;
  right: 1px;
  top: 64px;
  width: 10px;
  height: 64px;
  padding: 32px 1px 0;
  border: 2px solid #666;
  border-radius: 5px;
  background: #fff;
  z-index: 1;
}
.meter span {
  display: block;
  width: 4px;
  height: 26px;
  border-radius: 2px;
  background: #f07a28;
}

/* filter combos */
.filters {
  display: flex;
  gap: 4px;
  height: 33px;
  padding: 2px 3px;
  background: #c9ccd0;
  border-bottom: 1px solid #999da1;
}
.combo {
  position: relative;
  width: 124px;
}
.combo select {
  appearance: none;
  width: 100%;
  height: 28px;
  padding: 0 3px;
  background: #fff;
  border: 1px solid #b3b6b9;
}
.combo::after {
  content: "";
  position: absolute;
  right: 7px;
  top: 12px;
  width: 7px;
  height: 5px;
  background: #444;
  clip-path: polygon(0 0, 100% 0, 50% 100%);
}

/* docked panels */
.workspace {
  flex: 1;
  min-height: 0;
  display: flex;
}
.panel {
  display: flex;
  flex-direction: column;
  min-height: 0;
  overflow: hidden;
  border: 1px solid #c5c8cd;
  border-top: 0;
  background: #fff;
}
.nav {
  position: relative;
  flex: none;
  width: 262px;
  margin-right: 6px;
}
.grab {
  display: flex;
  align-items: center;
  justify-content: flex-end;
  flex: none;
  height: 15px;
  padding-right: 6px;
  background: #d2d4da;
}
.grab button, .grab svg {
  display: block;
}
.navtitle {
  flex: none;
  height: 27px;
  padding: 3px 10px 0;
  background: #eee;
  border-top: 1px solid #dcdcdc;
  color: #777;
}
.navtools {
  display: flex;
  align-items: center;
  gap: 5px;
  flex: none;
  height: 40px;
  padding: 0 1px 0 7px;
  background: #eee;
  border: solid #cdd0d4;
  border-width: 1px 0;
}
.navtools > svg {
  margin-right: auto;
}
.navtools button {
  display: flex;
  align-items: center;
  justify-content: center;
  width: 28px;
  height: 30px;
  background: #e6f1fd;
  border: 1px solid #62a8f3;
  border-radius: 4px;
}
.tree {
  padding-top: 2px;
}
.tree li {
  display: flex;
  align-items: center;
  gap: 6px;
  height: 26px;
  margin: 2px 0 4px 3px;
}
.tree .leaf {
  width: 175px;
  margin-left: 50px;
  padding-left: 4px;
  gap: 7px;
}
.tree .on {
  background: #c9d9f0;
}
.thumb {
  width: 10px;
  border-radius: 5px;
  background: #c9c9c9;
}
.nav-thumb {
  position: absolute;
  right: 4px;
  top: 358px;
  bottom: 35px;
}
.middle {
  flex: none;
  display: grid;
  grid-template-rows: 400fr 378fr;
  gap: 6px;
  width: 349px;
}
.subtabs {
  display: flex;
  flex: none;
  height: 28px;
  background: #eee;
  border-bottom: 1px solid #cdd0d4;
}
.subtabs button {
  padding: 0 10px 1px;
  background: #dedede;
  border-right: 1px solid #c5c8cd;
  color: #888;
}
.subtabs .active {
  background: #eee;
  color: #222;
  font-weight: 500;
}
.tools-row {
  display: flex;
  align-items: center;
  gap: 12px;
  flex: none;
  height: 38px;
  padding: 0 4px 0 5px;
  background: #eee;
  color: #333;
}
.tools-row button {
  display: flex;
  align-items: center;
  gap: 5px;
}
.chev {
  width: 10px;
  height: 7px;
  margin-left: auto;
  background: #222;
  clip-path: polygon(0 0, 50% 50%, 50% 0, 100% 50%, 50% 100%, 50% 50%, 0 100%);
}
.find {
  display: flex;
  align-items: center;
  flex: none;
  height: 25px;
  padding: 0 9px 0 2px;
  border: solid #c5c8cd;
  border-width: 1px 0;
  color: #3d94c8;
}
.find input {
  flex: 1;
  outline: none;
}
.find input::placeholder {
  color: #888;
}
.comps {
  padding-top: 3px;
}
.comps li {
  display: flex;
  align-items: center;
  gap: 4px;
  height: 30px;
  padding-left: 12px;
}
.comps .l2 {
  padding-left: 37px;
}
.comps .l3 {
  padding-left: 75px;
}
.comps span {
  padding: 3px 4px;
}
.comps .sel {
  width: 124px;
  background: #b1cbec;
}
.open {
  width: 8px;
  height: 8px;
  background: #333;
  clip-path: polygon(100% 0, 100% 100%, 0 100%);
}
.propwrap {
  display: flex;
  flex: 1;
  min-height: 0;
  overflow: hidden;
}
table {
  width: 327px;
  flex: none;
  align-self: flex-start;
  table-layout: fixed;
  border-collapse: collapse;
}
th, td {
  height: 26px;
  padding: 0 3px;
  border: 1px solid #d0d2d4;
  border-width: 0 1px 1px 0;
  text-align: left;
}
th {
  background: #eee;
  color: #444;
  font-weight: 400;
  text-align: center;
}
thead th {
  height: 27px;
}
.n {
  width: 27px;
}
.k {
  width: 126px;
}
.link {
  color: #2463f0;
}
.ro {
  background: #e9e9e9;
  color: #999;
}
.plus {
  width: 16px;
  height: 16px;
  margin-right: 8px;
  vertical-align: -2px;
  border: 1px solid #777;
  border-radius: 2px;
  background: linear-gradient(#333, #333) center / 6px 1px no-repeat, linear-gradient(#333, #333) center / 1px 6px no-repeat, #fff;
}
.propwrap .thumb {
  margin: 18px 0 42px 7px;
}
.splitter {
  flex: none;
  display: flex;
  align-items: center;
  width: 6px;
}
.splitter button {
  width: 6px;
  height: 125px;
  background: #5d6874;
}
.splitter button::after {
  content: "";
  display: block;
  width: 4px;
  height: 8px;
  margin-left: 1px;
  background: #d5d8dc;
  clip-path: polygon(100% 0, 100% 100%, 0 50%);
}

/* 3D view */
.viewport {
  position: relative;
  flex: 1;
  min-width: 0;
  overflow: hidden;
  background: #000;
}
.scene {
  display: block;
  width: 100%;
  height: 100%;
}
.dims text {
  fill: #fff;
  font: 22px "Noto Sans CJK SC", sans-serif;
  text-anchor: middle;
}
.dims .z {
  fill: #00f;
}
.dims .x {
  fill: #f00;
}
.viewtools {
  position: absolute;
  top: 1px;
  right: 0;
  display: flex;
  flex-direction: column;
  align-items: center;
  gap: 6px;
  width: 41px;
  height: 283px;
  padding: 12px 2px 0 0;
  background: #96999d;
  border: solid #c4c6c8;
  border-width: 1px 0 1px 1px;
}
.viewtools button, .viewtools svg {
  display: block;
}
.viewtools .d2 {
  width: 30px;
  height: 30px;
  padding: 12px 3px 0 0;
  background: #8496ab;
  border: 1px solid #333f4d;
  font-size: 10px;
  line-height: 16px;
  text-align: right;
}
.viewtools .arrow {
  background: #333f4d;
  margin: 1px 0;
}
.viewtools hr {
  width: 30px;
  margin: -1px 0;
  border: 0;
  border-top: 1px solid #66615a;
}

/* status bar */
.status {
  display: flex;
  align-items: center;
  flex: none;
  height: 40px;
  padding: 0 37px 0 3px;
  background: #dddde0;
  border-top: 1px solid #a5a5a8;
  border-bottom: 1px solid #fff;
  color: #333;
}
.readout {
  display: grid;
  grid-template-columns: 328px 104px 167px 128px 128px;
}
.toggles {
  display: flex;
  gap: 3px;
}
.toggles button {
  display: flex;
  align-items: center;
  justify-content: center;
  height: 31px;
}
.tg {
  width: 32px;
  background: #fff;
  border: 1px solid #4aa0f4;
}
.tg.wide {
  width: 46px;
  gap: 8px;
}
.tg.off {
  margin-left: 3px;
  background: #cdcdcf;
  border-color: #b5b5b8;
}
.tg.gap {
  margin-left: 4px;
}
.toggles .txt {
  padding: 0 7px;
  background: #cdcdcf;
  border: 1px solid #a2a2a5;
}
.hint {
  margin-left: 8px;
}
.fps {
  margin-left: auto;
}
.taskbar {
  display: flex;
  justify-content: space-between;
  flex: none;
  height: 9px;
  padding: 0 94px 0 636px;
  overflow: hidden;
  background: #1c1c1c;
  color: #fff;
}
.task {
  width: 61px;
  background: #4a4a4a;
}
.taskbar time {
  padding-top: 1px;
}
```
